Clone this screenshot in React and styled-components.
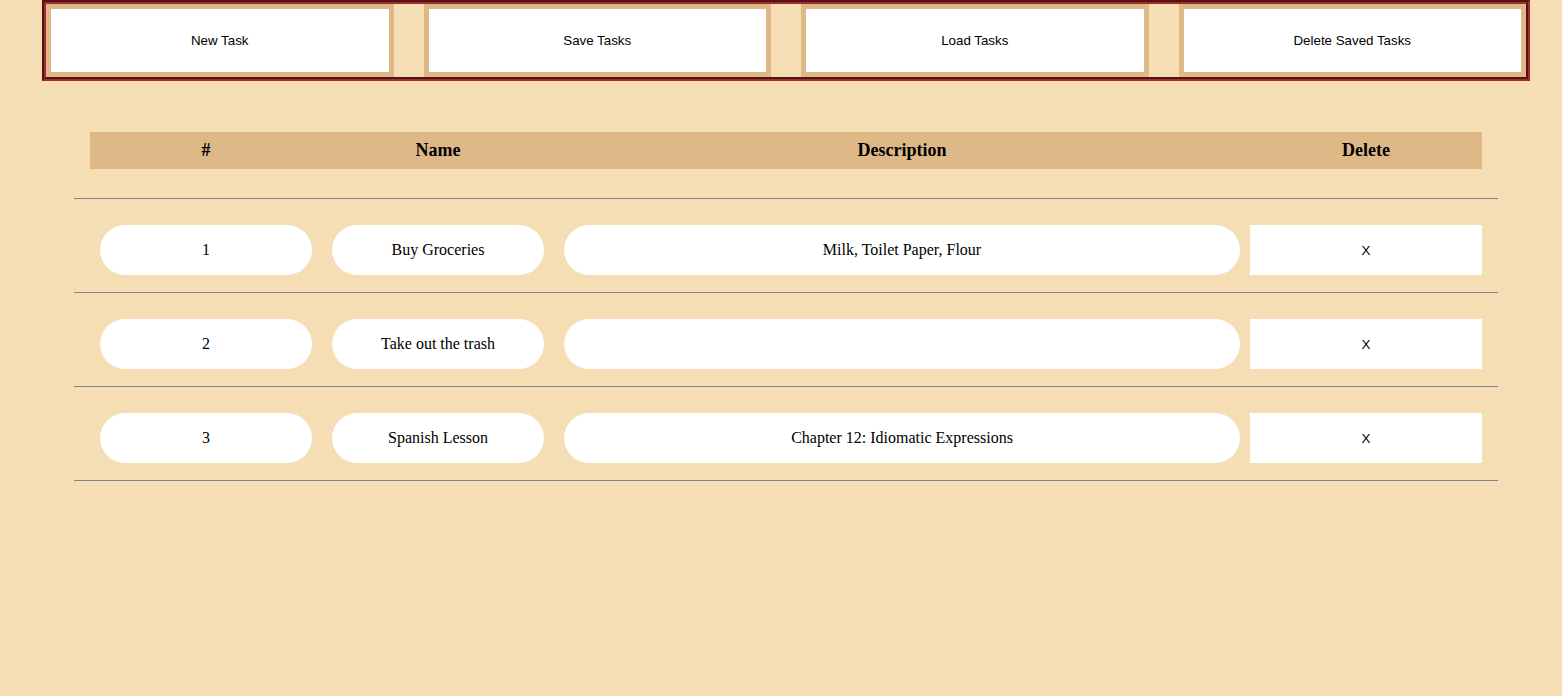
import React from 'react';
import styled, { createGlobalStyle } from 'styled-components';

const GlobalStyle = createGlobalStyle`
  html, body {
    margin: 0;
    background: #f5deb3;
  }
  body {
    font-family: "Liberation Serif", "Times New Roman", serif;
    color: #000;
  }
`;

const Page = styled.div`
  width: 1488px;
  margin-left: 42px;
`;

const Toolbar = styled.nav`
  display: grid;
  grid-template-columns: repeat(4, 1fr);
  column-gap: 30px;
  border: 4px groove #a52a2a;
  background: #f5deb3;
`;

const ToolButton = styled.button`
  height: 73px;
  border: 5px solid #deb887;
  background: #fff;
  font-family: "Liberation Sans", Arial, sans-serif;
  font-size: 13.33px;
  color: #000;
  cursor: pointer;
`;

const TableWrap = styled.section`
  margin: 51px 32px 0;
`;

const columns = '232px 232px 696px 232px';

const HeaderRow = styled.div`
  display: grid;
  grid-template-columns: ${columns};
  height: 37px;
  margin: 0 16px 29px;
  background: #deb887;
`;

const HeaderCell = styled.div`
  display: flex;
  align-items: center;
  justify-content: center;
  font-weight: bold;
  font-size: 18px;
`;

const Body = styled.div`
  border-bottom: 1px solid #7a8294;
`;

const Row = styled.div`
  display: grid;
  grid-template-columns: ${columns};
  padding: 26px 16px 17px;
  border-top: 1px solid #7a8294;
`;

const Cell = styled.div`
  display: flex;
  align-items: center;
  justify-content: center;
  height: 50px;
  margin: 0 10px;
  border-radius: 25px;
  background: #fff;
  font-size: 16px;
`;

const DeleteButton = styled.button`
  height: 50px;
  border: none;
  background: #fff;
  font-family: "Liberation Sans", Arial, sans-serif;
  font-size: 13.33px;
  color: #000;
  cursor: pointer;
`;

const tasks = [
  { id: 1, name: 'Buy Groceries', description: 'Milk, Toilet Paper, Flour' },
  { id: 2, name: 'Take out the trash', description: '' },
  { id: 3, name: 'Spanish Lesson', description: 'Chapter 12: Idiomatic Expressions' },
];

export default function App() {
  return (
    <Page>
      <GlobalStyle />
      <Toolbar>
        <ToolButton>New Task</ToolButton>
        <ToolButton>Save Tasks</ToolButton>
        <ToolButton>Load Tasks</ToolButton>
        <ToolButton>Delete Saved Tasks</ToolButton>
      </Toolbar>
      <TableWrap>
        <HeaderRow>
          <HeaderCell>#</HeaderCell>
          <HeaderCell>Name</HeaderCell>
          <HeaderCell>Description</HeaderCell>
          <HeaderCell>Delete</HeaderCell>
        </HeaderRow>
        <Body>
          {tasks.map(task => (
            <Row key={task.id}>
              <Cell>{task.id}</Cell>
              <Cell>{task.name}</Cell>
              <Cell>{task.description}</Cell>
              <DeleteButton>X</DeleteButton>
            </Row>
          ))}
        </Body>
      </TableWrap>
    </Page>
  );
}
